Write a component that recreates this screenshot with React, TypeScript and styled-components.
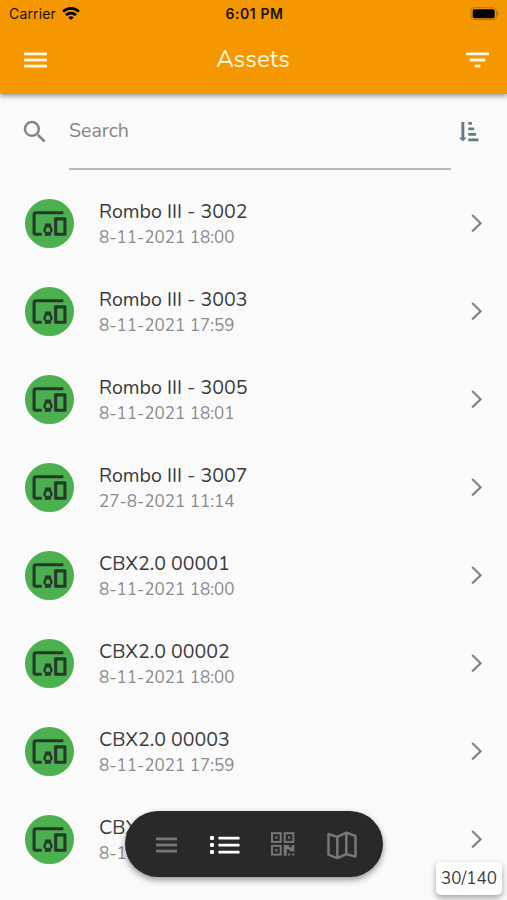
import React from "react";
import styled, { createGlobalStyle } from "styled-components";
import { MdSearch, MdDevicesOther } from "react-icons/md";

const GlobalStyle = createGlobalStyle`
  * { box-sizing: border-box; }
  body { margin: 0; background: #fafafa; font-family: Nunito, "Noto Sans", sans-serif; }
  svg { display: block; flex: none; }
`;

const Screen = styled.div`
  position: relative;
  width: 507px;
  height: 900px;
  overflow: hidden;
  background: #fafafa;
  display: flex;
  flex-direction: column;
`;

const Header = styled.header`
  flex: none;
  height: 94px;
  background: #f59700;
  box-shadow: 0 2px 5px rgba(0, 0, 0, 0.42);
`;

const StatusBar = styled.div`
  height: 27px;
  padding: 0 7px 0 9px;
  display: grid;
  grid-template-columns: 1fr auto 1fr;
  align-items: center;
  color: #1a1000;
  font: 14px/27px Inter, sans-serif;
`;

const Carrier = styled.div`
  display: flex;
  align-items: center;
  gap: 6px;
  letter-spacing: 0.15px;
`;

const Clock = styled.div`
  font-weight: 600;
  font-size: 14px;
  letter-spacing: 0.55px;
`;

const BatterySlot = styled.div`
  justify-self: end;
`;

const TitleBar = styled.div`
  height: 65px;
  padding: 0 18px 0 24px;
  display: grid;
  grid-template-columns: 1fr auto 1fr;
  align-items: center;
  color: #fff8e6;
  & > :last-child { justify-self: end; }
`;

const Title = styled.h1`
  margin: 0 0 0 -7px;
  font-size: 24.2px;
  font-weight: 400;
`;

const Label = styled.span<{ $size: number; $color?: string }>`
  font-size: ${(p) => p.$size}px;
  color: ${(p) => p.$color ?? "inherit"};
  white-space: nowrap;
`;

const SearchRow = styled.div`
  flex: none;
  height: 85px;
  padding: 14px 27px 0 20px;
  display: flex;
  color: #858585;
  & > svg:first-child { margin-top: 8.5px; }
  & > svg:last-child { margin: 14px 0 0 8px; }
`;

const SearchField = styled.div`
  width: 382px;
  height: 62px;
  margin-left: 19px;
  padding-top: 9px;
  line-height: 28px;
  border-bottom: 2px solid #b8b8b8;
`;

const Row = styled.div`
  flex: none;
  height: 88px;
  padding: 0 24px 0 25px;
  display: flex;
  align-items: center;
`;

const Avatar = styled.div`
  width: 49px;
  height: 49px;
  border-radius: 50%;
  background: #4caf50;
  color: #26382a;
  display: flex;
  align-items: center;
  justify-content: center;
`;

const RowText = styled.div`
  flex: 1;
  margin-left: 25px;
  padding-top: 3px;
  display: flex;
  flex-direction: column;
  line-height: 26px;
`;

const NavPill = styled.nav`
  position: absolute;
  left: 125px;
  top: 811px;
  width: 258px;
  height: 66px;
  border-radius: 33px;
  background: #292929;
  box-shadow: 0 3px 6px rgba(0, 0, 0, 0.4);
  display: grid;
  grid-template-columns: repeat(4, 1fr);
  align-items: center;
  justify-items: center;
  padding: 2px 12px 0;
`;

const Counter = styled.div`
  position: absolute;
  left: 436px;
  top: 862px;
  width: 66px;
  height: 33px;
  border-radius: 5px;
  background: #fff;
  color: #3c3c3c;
  box-shadow: 0 3px 6px rgba(0, 0, 0, 0.35);
  display: flex;
  align-items: center;
  justify-content: center;
`;

const WifiIcon = () => (
  <svg width="18" height="14" viewBox="0 0 18 14" fill="none" stroke="#000" strokeWidth="2.7">
    <path d="M1.1 4.6a11.3 11.3 0 0 1 15.8 0" />
    <path d="M4 8.1a7.1 7.1 0 0 1 10 0" />
    <path d="M9 13.1 6.3 10.4a4 4 0 0 1 5.4 0Z" fill="#000" stroke="none" />
  </svg>
);

const BatteryIcon = () => (
  <svg width="30" height="14" viewBox="0 0 30 14">
    <rect x="1" y=".7" width="25.5" height="12" rx="3.5" fill="none" stroke="#b87200" />
    <rect x="2.7" y="2.2" width="22" height="9" rx="1.8" fill="#000" />
    <path d="M27.5 4.7q2.4 2 0 4Z" fill="#a66800" />
  </svg>
);

const MenuIcon = ({ width }: { width: number }) => (
  <svg width={width} height="16" viewBox={`0 0 ${width} 16`} fill="currentColor">
    {[0.5, 6.6, 12.7].map((y) => (
      <rect key={y} y={y} width={width} height="2.8" />
    ))}
  </svg>
);

const FilterIcon = () => (
  <svg width="23" height="16" viewBox="0 0 23 16" fill="currentColor">
    <rect y=".5" width="23" height="2.8" rx=".5" />
    <rect x="3.7" y="6.6" width="15.6" height="2.8" rx=".5" />
    <rect x="8.7" y="12.7" width="5.6" height="2.8" rx=".5" />
  </svg>
);

const SortIcon = () => (
  <svg width="21" height="20" viewBox="0 0 21 20" fill="#5c7d88">
    <path d="M2.4 0h2.9v15.4h2.5L3.8 19.6-.2 15.4h2.6z" />
    <rect x="9.2" y="0" width="3.8" height="2.7" rx=".6" />
    <rect x="9.2" y="5.5" width="6" height="2.7" rx=".6" />
    <rect x="9.2" y="11" width="8" height="2.7" rx=".6" />
    <rect x="9.2" y="16.5" width="10.3" height="2.8" rx=".6" />
  </svg>
);

const ChevronIcon = () => (
  <svg width="12" height="20" viewBox="0 0 12 20" fill="none" stroke="#858585" strokeWidth="2.2">
    <path d="M1.2 2 9.6 10.2 1.2 18.4" />
  </svg>
);

const ListIcon = () => (
  <svg width="30" height="20" viewBox="0 0 30 20" fill="#fff">
    {[1, 8, 15].map((y) => (
      <g key={y}>
        <rect x="0" y={y} width="4" height="4" rx="1.2" />
        <rect x="8.5" y={y + 0.8} width="21" height="2.6" rx=".5" />
      </g>
    ))}
  </svg>
);

const QrIcon = () => (
  <svg width="24" height="24" viewBox="0 0 24 24" fill="#777">
    {[[0, 0], [12.7, 0], [0, 12.7]].map(([x, y]) => (
      <g key={`${x}-${y}`}>
        <rect x={x + 1} y={y + 0.2} width="8.7" height="8.7" fill="none" stroke="#777" strokeWidth="2" />
        <rect x={x + 4.2} y={y + 3.4} width="2.3" height="2.3" />
      </g>
    ))}
    <path d="M12.7 12h5.4v2.2h2.6V12h2.6v6.6h-4.6v-2.2h-3v6.4h-3zM17 20.6h2v2h-2zM21.2 20.6h2v2h-2z" />
  </svg>
);

const MapIcon = () => (
  <svg width="30" height="29" viewBox="0 0 30 29" fill="none" stroke="#777" strokeWidth="2.5" strokeLinejoin="round">
    <path d="M1.5 3 10.3 5.9 19.3 1.6 28.5 5v20.6L19.3 23 10.3 27.2 1.5 23.7zM10.3 5.9v21.3M19.3 1.6V23" />
  </svg>
);

const NavItem = styled.div`
  color: #777;
  & > svg { overflow: visible; }
`;

const assets = [
  ["Rombo III - 3002", "8-11-2021 18:00"],
  ["Rombo III - 3003", "8-11-2021 17:59"],
  ["Rombo III - 3005", "8-11-2021 18:01"],
  ["Rombo III - 3007", "27-8-2021 11:14"],
  ["CBX2.0 00001", "8-11-2021 18:00"],
  ["CBX2.0 00002", "8-11-2021 18:00"],
  ["CBX2.0 00003", "8-11-2021 17:59"],
  ["CBX2.0 00004", "8-11-2021 18:00"],
];

export default function App() {
  return (
    <Screen>
      <GlobalStyle />
      <Header>
        <StatusBar>
          <Carrier>Carrier <WifiIcon /></Carrier>
          <Clock>6:01 PM</Clock>
          <BatterySlot><BatteryIcon /></BatterySlot>
        </StatusBar>
        <TitleBar>
          <MenuIcon width={23} />
          <Title>Assets</Title>
          <FilterIcon />
        </TitleBar>
      </Header>
      <SearchRow>
        <MdSearch size={30} />
        <SearchField><Label $size={19.6}>Search</Label></SearchField>
        <SortIcon />
      </SearchRow>
      {assets.map(([name, date]) => (
        <Row key={name}>
          <Avatar><MdDevicesOther size={37} /></Avatar>
          <RowText>
            <Label $size={19.6} $color="#3a3a3a">{name}</Label>
            <Label $size={17.1} $color="#8a8a8a">{date}</Label>
          </RowText>
          <ChevronIcon />
        </Row>
      ))}
      <NavPill>
        <NavItem><MenuIcon width={21} /></NavItem>
        <NavItem><ListIcon /></NavItem>
        <NavItem><QrIcon /></NavItem>
        <NavItem><MapIcon /></NavItem>
      </NavPill>
      <Counter><Label $size={17}>30/140</Label></Counter>
    </Screen>
  );
}
